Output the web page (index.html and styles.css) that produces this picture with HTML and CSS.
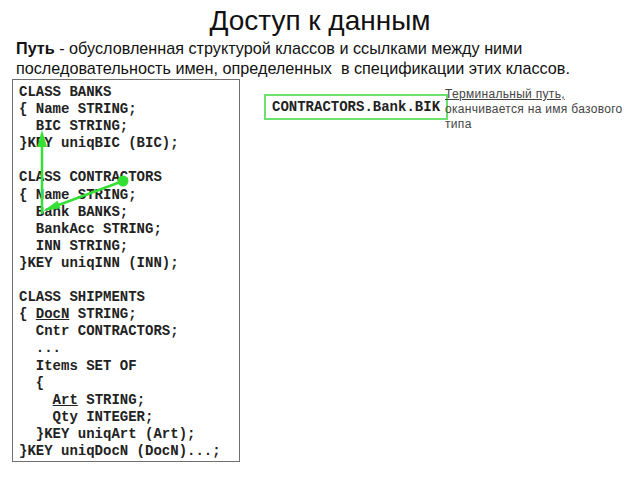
FILE: index.html
```html
<!DOCTYPE html>
<html>
<head>
 <title>Доступ к данным</title>
 <link rel="stylesheet" href="styles.css">
</head>
<body>
 <h1 class="title">Доступ к данным</h1>
 <p class="lead"><b>Путь</b> - обусловленная структурой классов и ссылками между ними<br>последовательность имен, определенных&nbsp; в спецификации этих классов.</p>
 <div class="content">
 <div class="code-box">
<pre class="code">CLASS BANKS
{ Name STRING;
  BIC STRING;
}KEY uniqBIC (BIC);

CLASS CONTRACTORS
{ Name STRING;
  Bank BANKS;
  BankAcc STRING;
  INN STRING;
}KEY uniqINN (INN);

CLASS SHIPMENTS
{ <u>DocN</u> STRING;
  Cntr CONTRACTORS;
  ...
  Items SET OF
  {
    <u>Art</u> STRING;
    Qty INTEGER;
  }KEY uniqArt (Art);
}KEY uniqDocN (DocN)...;</pre>
 <!-- path arrows drawn over the code -->
 <svg class="arrows" width="228" height="383" viewBox="0 0 228 383">
 <line x1="30" y1="135" x2="30" y2="62" stroke="#33e033" stroke-width="2.5"/>
 <polygon points="30,51 25,68 35,68" fill="#33e033"/>
 <line x1="111" y1="102" x2="44" y2="127" stroke="#33e033" stroke-width="2.5"/>
 <polygon points="31,132 48.4,129.3 45.6,121.7" fill="#33e033"/>
 <circle cx="111" cy="102" r="5.5" fill="#33e033"/>
 </svg>
 </div>
 <div class="side">
 <div class="path-box">CONTRACTORS.Bank.BIK</div>
 <div class="note"><u>Терминальный путь,</u><br>оканчивается на имя базового<br>типа</div>
 </div>
 </div>
</body>
</html>
```
FILE: styles.css
```css
body {
margin: 0;
font-family: "Liberation Sans", Arial, sans-serif;
background-color: #fff;
color: #111;
}
.title {
margin: 0;
padding-top: 6px;
font-size: 28px;
line-height: 30px;
font-weight: normal;
text-align: center;
}
.lead {
margin: 2px 0 0 0;
padding-left: 16px;
font-size: 16.2px;
line-height: 20px;
}
.content {
display: flex;
align-items: flex-start;
margin-top: 1px;
padding-left: 12px;
}
.code-box {
position: relative;
width: 226px;
height: 381px;
border: 1px solid #707070;
}
.code {
margin: 0;
padding: 4px 0 0 6px;
font-family: "Liberation Mono", "Courier New", monospace;
font-weight: bold;
font-size: 14px;
line-height: 17.1px;
color: #222;
}
.arrows {
position: absolute;
left: -1px;
top: -1px;
}
.side {
display: flex;
align-items: flex-start;
margin-left: 24px;
}
.path-box {
margin-top: 15px;
padding: 3px 6px;
border: 2px solid #6ee06e;
font-family: "Liberation Mono", "Courier New", monospace;
font-weight: bold;
font-size: 14px;
line-height: 16px;
color: #222;
}
.note {
margin-top: 8px;
margin-left: -3px;
font-size: 12px;
line-height: 15px;
letter-spacing: 0.3px;
color: #444;
}
```
